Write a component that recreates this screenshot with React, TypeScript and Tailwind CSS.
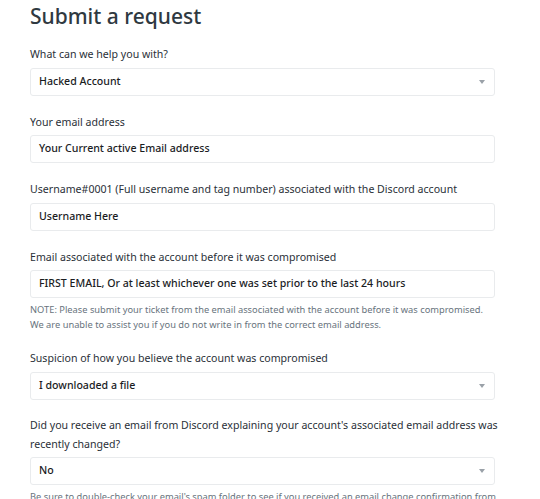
import React from 'react'

const font = { fontFamily: '"Noto Sans", "Open Sans", Arial, sans-serif' }

function Label({ children, tight = false }: { children: React.ReactNode; tight?: boolean }) {
  return (
    <div className={`text-[10.6px] ${tight ? 'leading-[19px]' : 'leading-[20px]'} text-[#2a3038] mb-[3.5px]`}>
      {children}
    </div>
  )
}

function Box({ value, select = false }: { value: string; select?: boolean }) {
  return (
    <div className="h-[28px] w-full rounded-[3px] border border-[#e9ebed] bg-white flex items-center justify-between pl-[8px] pr-[9px]">
      <span className="text-[10.6px] font-medium text-[#1b1d1f]">{value}</span>
      {select && (
        <svg width="6" height="4" viewBox="0 0 6 4">
          <path d="M0 0 H6 L3 4 Z" fill="#9aa1a8" />
        </svg>
      )}
    </div>
  )
}

function Note({ children }: { children: React.ReactNode }) {
  return <p className="mt-[4px] text-[9.3px] leading-[15px] text-[#68737d] whitespace-nowrap">{children}</p>
}

export default function App() {
  return (
    <div style={font} className="w-[540px] h-[499px] overflow-hidden bg-white px-[30px]">
      <div className="w-[465px]">
        <h1 className="text-[21px] leading-[32px] font-medium text-[#2f3941] mb-[12px]">Submit a request</h1>

        <div>
          <Label>What can we help you with?</Label>
          <Box value="Hacked Account" select />
        </div>

        <div className="mt-[16px]">
          <Label>Your email address</Label>
          <Box value="Your Current active Email address" />
        </div>

        <div className="mt-[16px]">
          <Label>Username#0001 (Full username and tag number) associated with the Discord account</Label>
          <Box value="Username Here" />
        </div>

        <div className="mt-[16px]">
          <Label>Email associated with the account before it was compromised</Label>
          <Box value="FIRST EMAIL, Or at least whichever one was set prior to the last 24 hours" />
          <Note>
            NOTE: Please submit your ticket from the email associated with the account before it was compromised.
            <br />
            We are unable to assist you if you do not write in from the correct email address.
          </Note>
        </div>

        <div className="mt-[16px]">
          <Label>Suspicion of how you believe the account was compromised</Label>
          <Box value="I downloaded a file" select />
        </div>

        <div className="mt-[16px]">
          <Label tight>
            <span className="whitespace-nowrap">
              Did you receive an email from Discord explaining your account's associated email address was
            </span>
            <br />
            recently changed?
          </Label>
          <Box value="No" select />
          <Note>
            Be sure to double-check your email's spam folder to see if you received an email change confirmation from
            <br />
            Discord.
          </Note>
        </div>
      </div>
    </div>
  )
}
